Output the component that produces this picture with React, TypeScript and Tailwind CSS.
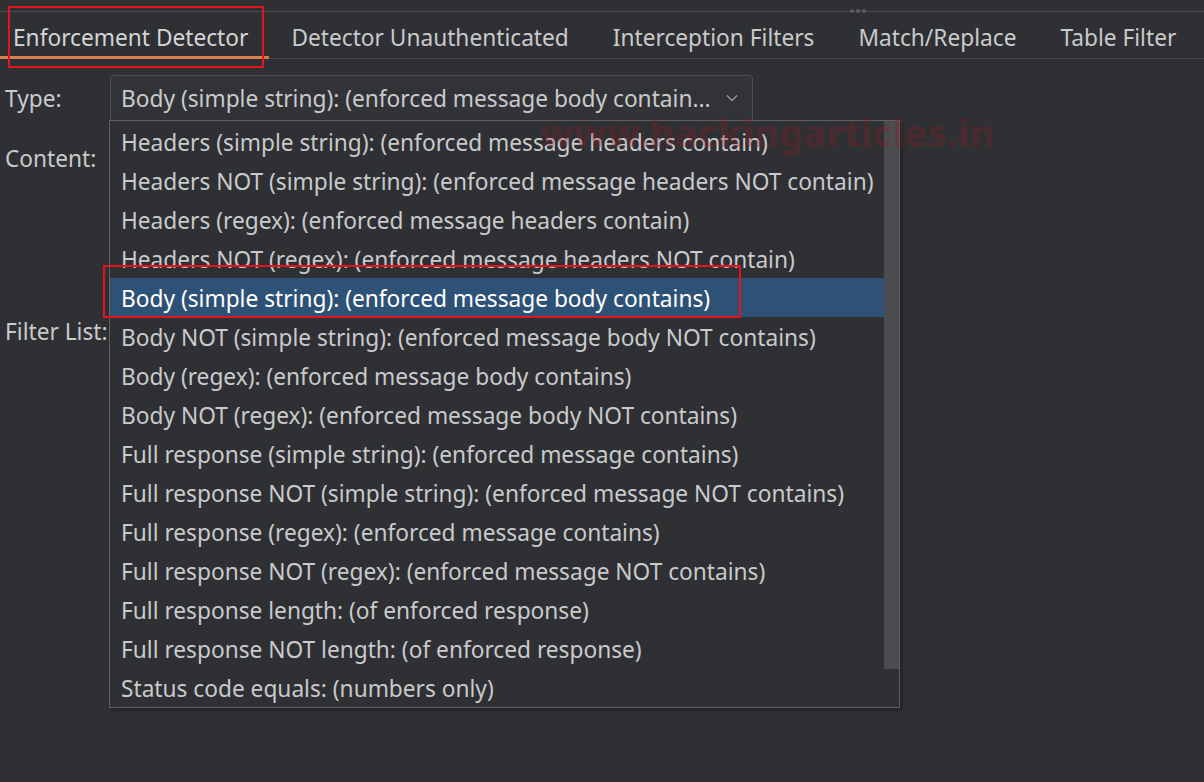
import React from 'react';

const tabs = [
  'Enforcement Detector',
  'Detector Unauthenticated',
  'Interception Filters',
  'Match/Replace',
  'Table Filter',
];

const options = [
  'Headers (simple string): (enforced message headers contain)',
  'Headers NOT (simple string): (enforced message headers NOT contain)',
  'Headers (regex): (enforced message headers contain)',
  'Headers NOT (regex): (enforced message headers NOT contain)',
  'Body (simple string): (enforced message body contains)',
  'Body NOT (simple string): (enforced message body NOT contains)',
  'Body (regex): (enforced message body contains)',
  'Body NOT (regex): (enforced message body NOT contains)',
  'Full response (simple string): (enforced message contains)',
  'Full response NOT (simple string): (enforced message NOT contains)',
  'Full response (regex): (enforced message contains)',
  'Full response NOT (regex): (enforced message NOT contains)',
  'Full response length: (of enforced response)',
  'Full response NOT length: (of enforced response)',
  'Status code equals: (numbers only)',
];

const SELECTED = 4;

export default function App() {
  return (
    <div
      className="relative w-[1204px] h-[782px] overflow-hidden bg-[#2f3033] text-[#c9cacc] text-[22.7px]"
      style={{ fontFamily: '"Noto Sans", "Open Sans", sans-serif' }}
    >
      {/* splitter line */}
      <div className="relative h-[12px] border-b border-[#4b4c4f]">
        <div className="absolute left-[850px] top-[9px] flex gap-[2px]">
          <span className="w-[4px] h-[4px] rounded-full bg-[#5a5b5e]" />
          <span className="w-[4px] h-[4px] rounded-full bg-[#5a5b5e]" />
          <span className="w-[4px] h-[4px] rounded-full bg-[#5a5b5e]" />
        </div>
      </div>

      {/* tab bar */}
      <div className="flex h-[47px] border-b border-[#46474a]">
        {tabs.map((t, i) => (
          <div
            key={t}
            className={`relative flex items-center h-full pt-[7px] whitespace-nowrap ${
              i === 0 ? 'pl-[13px] pr-[21px] text-[#d4d5d7]' : 'px-[22px]'
            }`}
          >
            {t}
            {i === 0 && (
              <span className="absolute left-0 right-0 bottom-[-1px] h-[3px] bg-[#d47f4d]" />
            )}
          </div>
        ))}
      </div>

      {/* highlight around active tab */}
      <div className="absolute left-[8px] top-[6px] w-[256px] h-[62px] border-2 border-[#e3141b] pointer-events-none" />

      {/* form */}
      <div className="relative">
        <div className="flex items-center mt-[16px] h-[48px]">
          <div className="w-[110px] pl-[5px]">Type:</div>
          <div className="flex items-center justify-between w-[643px] h-[48px] rounded-[4px] border border-[#4e5053] bg-[#323336] pl-[10px] pr-[12px]">
            <span className="whitespace-nowrap">Body (simple string): (enforced message body contain...</span>
            <svg width="16" height="16" viewBox="0 0 16 16" fill="none" className="mt-[-2px]">
              <path d="M3 5.5l5 5 5-5" stroke="#9a9b9e" strokeWidth="1.3" />
            </svg>
          </div>
        </div>
        <div className="pl-[5px] mt-[19px]">Content:</div>
        <div className="pl-[5px] mt-[139px]">Filter List:</div>

        {/* dropdown popup */}
        <div className="absolute left-[109px] top-[45px] w-[791px] h-[588px] border border-[#606164] bg-[#2f3033] flex shadow-[2px_2px_4px_rgba(0,0,0,0.35)]">
          <div className="flex-1 pt-[1px]">
            {options.map((o, i) => (
              <div
                key={o}
                className={`h-[39px] flex items-center pl-[11px] pt-[3px] whitespace-nowrap ${
                  i === SELECTED ? 'bg-[#2e5176] text-white' : ''
                }`}
              >
                {o}
              </div>
            ))}
          </div>
          <div className="w-[15px] h-[548px] bg-[#4b4c4f]" />
        </div>

        {/* highlight around selected item */}
        <div className="absolute left-[103px] top-[190px] w-[638px] h-[53px] border-2 border-[#e3141b] pointer-events-none" />
      </div>

      {/* watermark */}
      <div className="absolute left-[540px] top-[104px] text-[38px] font-extrabold text-[#8a1c28]/30 pointer-events-none whitespace-nowrap">
        www.hackingarticles.in
      </div>
    </div>
  );
}
